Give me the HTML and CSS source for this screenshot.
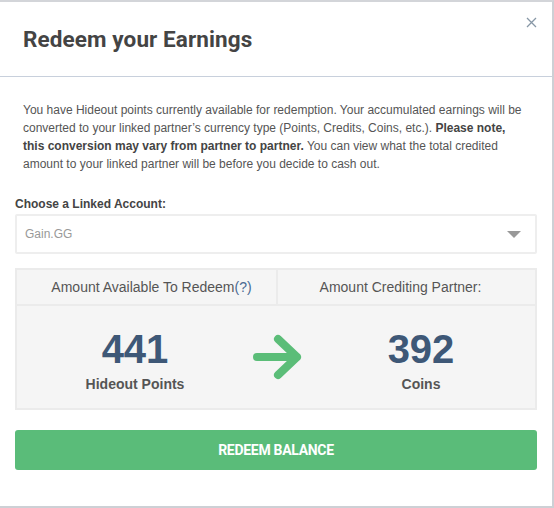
FILE: index.html
```html
<!DOCTYPE html>
<html>
<head>
<meta charset="utf-8">
<link rel="stylesheet" href="styles.css">
</head>
<body>
<div class="modal">
  <div class="modal-header">
    <h1 class="title">Redeem your Earnings</h1>
    <span class="close">
      <svg width="11" height="11" viewBox="0 0 11 11"><path d="M1 1L10 10M10 1L1 10" stroke="#8797a6" stroke-width="1.3" fill="none"/></svg>
    </span>
  </div>
  <div class="modal-body">
    <p class="intro">You have Hideout points currently available for redemption. Your accumulated earnings will be converted to your linked partner’s currency type (Points, Credits, Coins, etc.). <b>Please note, this conversion may vary from partner to partner.</b> You can view what the total credited amount to your linked partner will be before you decide to cash out.</p>
    <label class="field-label">Choose a Linked Account:</label>
    <div class="select">
      <span class="select-value">Gain.GG</span>
      <span class="caret"></span>
    </div>
    <div class="summary">
      <div class="summary-head">
        <div class="head-cell head-left">Amount Available To Redeem<span class="help">(?)</span></div>
        <div class="head-cell head-right">Amount Crediting Partner:</div>
      </div>
      <div class="summary-body">
        <div class="amount">
          <div class="amount-num">441</div>
          <div class="amount-unit">Hideout Points</div>
        </div>
        <div class="arrow">
          <svg width="50" height="46" viewBox="0 0 50 46"><path d="M4 23H44M25 5L44 23L25 41" stroke="#5bbd78" stroke-width="8" stroke-linecap="round" stroke-linejoin="round" fill="none"/></svg>
        </div>
        <div class="amount">
          <div class="amount-num">392</div>
          <div class="amount-unit">Coins</div>
        </div>
      </div>
    </div>
    <button class="redeem">REDEEM BALANCE</button>
  </div>
</div>
</body>
</html>
```
FILE: styles.css
```css
html, body {
  margin: 0;
  padding: 0;
  background: #fff;
}
.modal {
  width: 552px;
  height: 504px;
  border-top: 2px solid #d3d5d9;
  border-right: 2px solid #cdd0d5;
  border-bottom: 2px solid #cdd0d5;
  background: #fff;
  font-family: "Liberation Sans", Arial, sans-serif;
  position: relative;
}
.modal-header {
  height: 74px;
  border-bottom: 1px solid #c8d0dc;
  display: flex;
  align-items: center;
  padding-left: 23px;
}
.title {
  margin: 0;
  font-family: Roboto, sans-serif;
  font-weight: 700;
  font-size: 22.5px;
  color: #444;
  letter-spacing: 0.1px;
}
.close {
  position: absolute;
  top: 15px;
  right: 15px;
  width: 11px;
  height: 11px;
  line-height: 0;
}
.modal-body {
  padding: 0 15px;
}
.intro {
  margin: 24px 0 0;
  padding: 0 8px;
  font-size: 12px;
  line-height: 18px;
  color: #555;
}
.intro b {
  color: #444;
}
.field-label {
  display: block;
  margin-top: 23px;
  font-size: 12px;
  font-weight: 700;
  color: #444;
  line-height: 16px;
}
.select {
  margin-top: 2px;
  height: 34px;
  border: 2px solid #eeeeee;
  display: flex;
  align-items: center;
  justify-content: space-between;
  padding: 1px 14px 1px 8px;
  border-radius: 2px;
}
.select-value {
  font-size: 12px;
  color: #999;
}
.caret {
  width: 0;
  height: 0;
  border-left: 7px solid transparent;
  border-right: 7px solid transparent;
  border-top: 7px solid #999;
}
.summary {
  margin-top: 14px;
  border: 2px solid #ebebeb;
  background: #f5f5f5;
}
.summary-head {
  display: grid;
  grid-template-columns: 1fr 1fr;
  border-bottom: 2px solid #ebebeb;
}
.head-cell {
  height: 34px;
  display: flex;
  align-items: center;
  justify-content: center;
  font-size: 14px;
  color: #555;
}
.head-left {
  padding-left: 10px;
}
.head-right {
  border-left: 2px solid #ebebeb;
  padding-right: 12px;
}
.help {
  color: #4a6b93;
}
.summary-body {
  display: grid;
  grid-template-columns: 236px 1fr 236px;
  align-items: center;
  height: 102px;
}
.amount {
  display: flex;
  flex-direction: column;
  align-items: center;
}
.amount-num {
  font-size: 40px;
  font-weight: 700;
  color: #3e5877;
  line-height: 44px;
  margin-top: 4px;
}
.amount-unit {
  font-size: 14px;
  font-weight: 700;
  color: #555;
  margin-top: 5px;
}
.arrow {
  display: flex;
  justify-content: center;
  line-height: 0;
}
.redeem {
  display: block;
  width: 100%;
  margin-top: 20px;
  height: 40px;
  border: none;
  border-radius: 3px;
  background: #5abc79;
  color: #fff;
  font-family: Roboto, sans-serif;
  font-weight: 700;
  font-size: 14px;
  letter-spacing: -0.3px;
}
```
